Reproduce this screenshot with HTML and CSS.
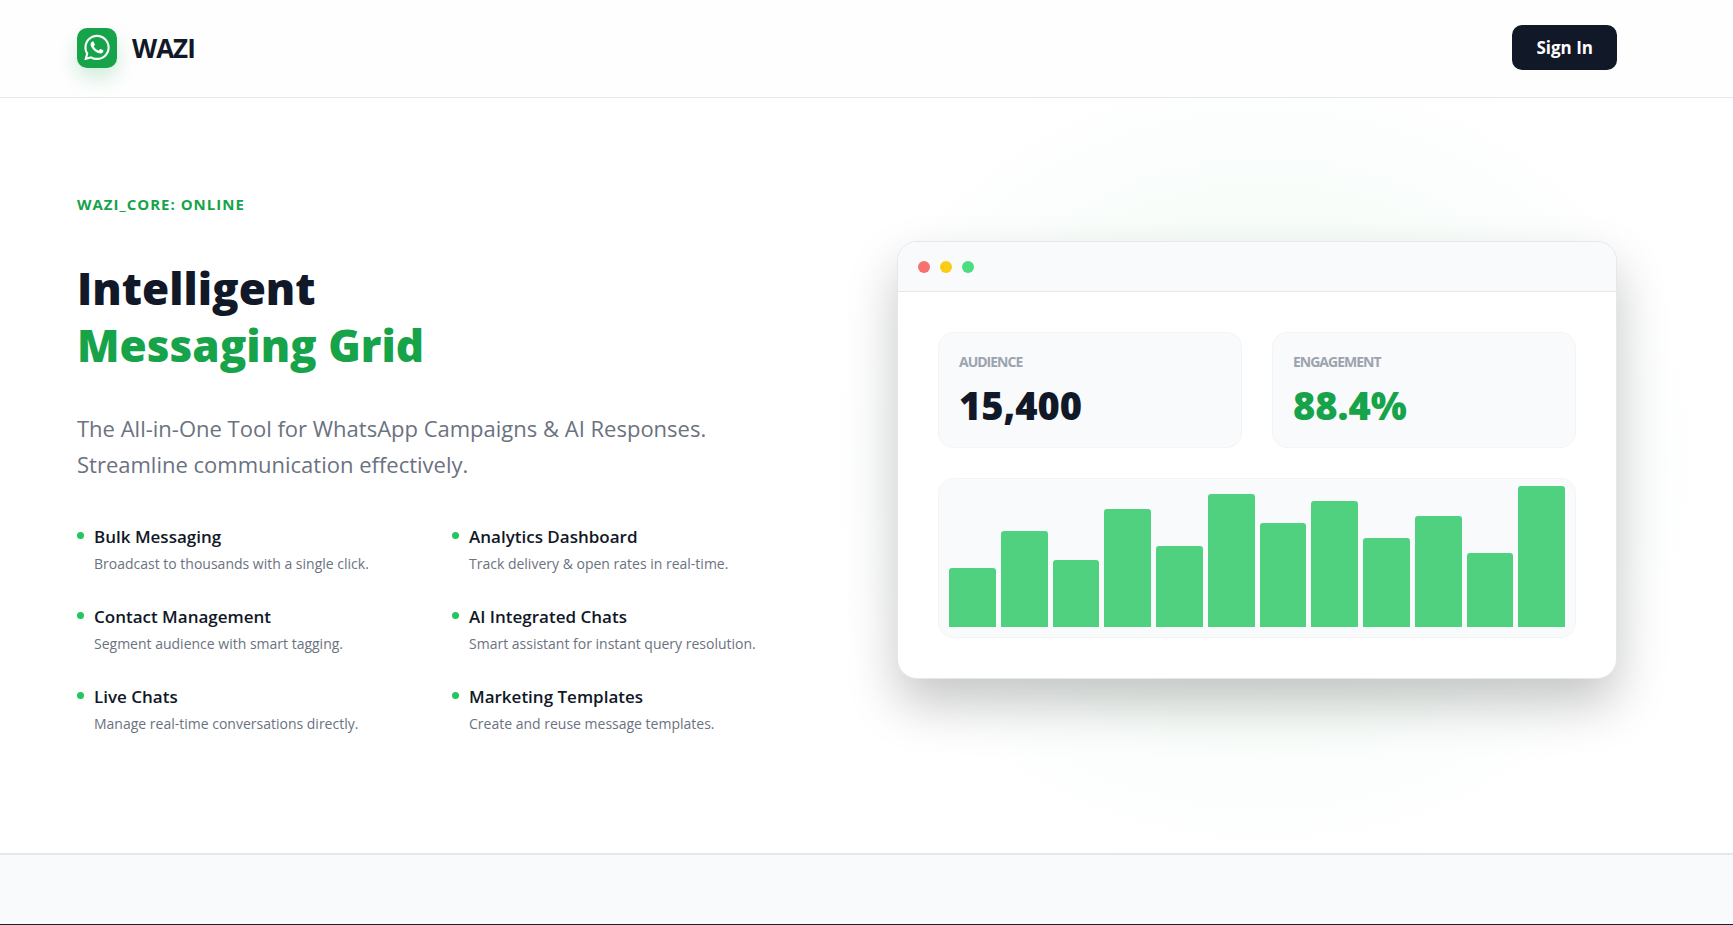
FILE: index.html
```html
<!DOCTYPE html>
<html lang="en">
<head>
    <meta charset="UTF-8">
    <meta name="viewport" content="width=device-width, initial-scale=1.0">
    <title>WAZI</title>
    <link rel="stylesheet" href="styles.css">
</head>
<body>
    <header class="navbar">
        <a class="brand" href="#">
            <span class="brand-icon">
                <svg viewBox="0 0 448 512" width="26" height="29" fill="currentColor" aria-hidden="true">
                    <path d="M380.9 97.1C339 55.1 283.2 32 223.9 32c-122.4 0-222 99.6-222 222 0 39.1 10.2 77.3 29.6 111L0 480l117.7-30.9c32.4 17.7 68.9 27 106.1 27h.1c122.3 0 224.1-99.6 224.1-222 0-59.3-25.2-115-67.1-157zm-157 341.6c-33.2 0-65.7-8.9-94-25.7l-6.7-4-69.8 18.3L72 359.2l-4.4-7c-18.5-29.4-28.2-63.3-28.2-98.2 0-101.7 82.8-184.5 184.6-184.5 49.3 0 95.6 19.2 130.4 54.1 34.8 34.9 56.2 81.2 56.1 130.5 0 101.8-84.9 184.6-186.6 184.6zm101.2-138.2c-5.5-2.8-32.8-16.2-37.9-18-5.1-1.9-8.8-2.8-12.5 2.8-3.7 5.6-14.3 18-17.6 21.8-3.2 3.7-6.5 4.2-12 1.4-32.6-16.3-54-29.1-75.5-66-5.7-9.8 5.7-9.1 16.3-30.3 1.8-3.7.9-6.9-.5-9.7-1.4-2.8-12.5-30.1-17.1-41.2-4.5-10.8-9.1-9.3-12.5-9.5-3.2-.2-6.9-.2-10.6-.2-3.7 0-9.7 1.4-14.8 6.9-5.1 5.6-19.4 19-19.4 46.3 0 27.3 19.9 53.7 22.6 57.4 2.8 3.7 39.1 59.7 94.8 83.8 35.2 15.2 49 16.5 66.6 13.9 10.7-1.6 32.8-13.4 37.4-26.4 4.6-13 4.6-24.1 3.2-26.4-1.3-2.5-5-3.9-10.5-6.6z"/>
                </svg>
            </span>
            <span class="brand-name">WAZI</span>
        </a>
        <button class="btn-signin" type="button">Sign In</button>
    </header>

    <main>
        <section class="hero">
            <div class="hero-text">
                <p class="status">WAZI_CORE: ONLINE</p>
                <h1>Intelligent<br><span class="green">Messaging Grid</span></h1>
                <p class="lead">The All-in-One Tool for WhatsApp Campaigns &amp; AI Responses.<br>Streamline communication effectively.</p>

                <ul class="features">
                    <li>
                        <h2>Bulk Messaging</h2>
                        <p>Broadcast to thousands with a single click.</p>
                    </li>
                    <li>
                        <h2>Analytics Dashboard</h2>
                        <p>Track delivery &amp; open rates in real-time.</p>
                    </li>
                    <li>
                        <h2>Contact Management</h2>
                        <p>Segment audience with smart tagging.</p>
                    </li>
                    <li>
                        <h2>AI Integrated Chats</h2>
                        <p>Smart assistant for instant query resolution.</p>
                    </li>
                    <li>
                        <h2>Live Chats</h2>
                        <p>Manage real-time conversations directly.</p>
                    </li>
                    <li>
                        <h2>Marketing Templates</h2>
                        <p>Create and reuse message templates.</p>
                    </li>
                </ul>
            </div>

            <div class="window">
                <div class="window-bar">
                    <span class="dot red"></span>
                    <span class="dot yellow"></span>
                    <span class="dot lime"></span>
                </div>
                <div class="window-body">
                    <div class="stats">
                        <div class="stat">
                            <p class="stat-label">AUDIENCE</p>
                            <p class="stat-value">15,400</p>
                        </div>
                        <div class="stat">
                            <p class="stat-label">ENGAGEMENT</p>
                            <p class="stat-value green">88.4%</p>
                        </div>
                    </div>
                    <div class="chart">
                        <div class="bar" style="height: 40%"></div>
                        <div class="bar" style="height: 65%"></div>
                        <div class="bar" style="height: 45%"></div>
                        <div class="bar" style="height: 80%"></div>
                        <div class="bar" style="height: 55%"></div>
                        <div class="bar" style="height: 90%"></div>
                        <div class="bar" style="height: 70%"></div>
                        <div class="bar" style="height: 85%"></div>
                        <div class="bar" style="height: 60%"></div>
                        <div class="bar" style="height: 75%"></div>
                        <div class="bar" style="height: 50%"></div>
                        <div class="bar" style="height: 95%"></div>
                    </div>
                </div>
            </div>
        </section>
    </main>

    <div class="next-section"></div>
</body>
</html>
```
FILE: styles.css
```css
* {
    margin: 0;
    padding: 0;
    box-sizing: border-box;
}

body {
    display: flex;
    flex-direction: column;
    min-height: 100vh;
    font-family: "Segoe UI", "Open Sans", "Noto Sans", sans-serif;
    color: #111827;
    background: #ffffff;
    overflow: hidden;
}

.navbar {
    display: flex;
    justify-content: space-between;
    align-items: center;
    padding: 25px 116px 27px 77px;
    background: #fefefe;
    border-bottom: 1px solid #e5e7eb;
}

.brand {
    display: flex;
    align-items: center;
    gap: 15px;
    color: inherit;
    text-decoration: none;
}

.brand-icon {
    display: flex;
    align-items: center;
    justify-content: center;
    width: 40px;
    height: 40px;
    border-radius: 10px;
    color: #ffffff;
    background: #16a34a;
    box-shadow: 0 10px 20px rgba(22, 163, 74, 0.2);
}

.brand-name {
    font-size: 26px;
    font-weight: 700;
    letter-spacing: -1px;
}

.btn-signin {
    height: 45px;
    padding: 0 24px;
    border: none;
    border-radius: 10px;
    font-family: inherit;
    font-size: 17px;
    font-weight: 700;
    color: #ffffff;
    background: #111827;
    cursor: pointer;
}

.hero {
    display: grid;
    grid-template-columns: 1fr 1fr;
    align-items: center;
    gap: 100px;
    padding: 88px 116px 119px 77px;
    background: radial-gradient(480px 430px at 73% 48%, rgba(34, 197, 94, 0.1) 0, rgba(34, 197, 94, 0.04) 50%, rgba(34, 197, 94, 0.01) 80%, rgba(34, 197, 94, 0) 100%);
}

.green {
    color: #16a34a;
}

.status {
    margin-bottom: 38px;
    font-size: 15px;
    line-height: 36px;
    font-weight: 700;
    letter-spacing: 1px;
    color: #16a34a;
}

h1 {
    font-size: 44px;
    line-height: 57px;
    font-weight: 800;
}

.lead {
    margin: 36px 0 42px;
    font-size: 22px;
    line-height: 36px;
    color: #6b7280;
}

.features {
    display: grid;
    grid-template-columns: 1fr 1fr;
    gap: 30px;
    list-style: none;
}

.features li {
    position: relative;
    padding-left: 17px;
}

.features li::before {
    content: "";
    position: absolute;
    left: 0;
    top: 8px;
    width: 7px;
    height: 7px;
    border-radius: 50%;
    background: #22c55e;
}

.features h2 {
    margin-bottom: 4px;
    font-size: 17px;
    line-height: 26px;
    font-weight: 600;
}

.features p {
    font-size: 14px;
    line-height: 20px;
    color: #6b7280;
}

.window {
    border: 1px solid #e5e7eb;
    border-radius: 20px;
    background: #ffffff;
    box-shadow: 0 25px 50px rgba(0, 0, 0, 0.22);
    overflow: hidden;
}

.window-bar {
    display: flex;
    align-items: center;
    gap: 10px;
    height: 50px;
    padding: 0 20px;
    background: #f9fafb;
    border-bottom: 1px solid #e5e7eb;
}

.dot {
    width: 12px;
    height: 12px;
    border-radius: 50%;
}

.red {
    background: #f87171;
}

.yellow {
    background: #facc15;
}

.lime {
    background: #4ade80;
}

.window-body {
    display: flex;
    flex-direction: column;
    gap: 30px;
    padding: 40px;
}

.stats {
    display: grid;
    grid-template-columns: 1fr 1fr;
    gap: 30px;
}

.stat,
.chart {
    border: 1px solid #f3f4f6;
    border-radius: 15px;
    background: #f9fafb;
}

.stat {
    padding: 17px 20px;
}

.stat-label {
    font-size: 14px;
    line-height: 24px;
    font-weight: 700;
    letter-spacing: -1px;
    color: #9ca3af;
}

.stat-value {
    padding-top: 6px;
    font-size: 38px;
    line-height: 50px;
    font-weight: 800;
}

.chart {
    display: flex;
    align-items: flex-end;
    gap: 5px;
    height: 160px;
    padding: 0 10px 10px;
}

.bar {
    flex: 1;
    border-radius: 3px 3px 0 0;
    background: #4fd180;
}

.next-section {
    flex: 1;
    background: #f9fafb;
    border-top: 2px solid #e5e7eb;
    border-bottom: 1px solid #1f2023;
}
```
